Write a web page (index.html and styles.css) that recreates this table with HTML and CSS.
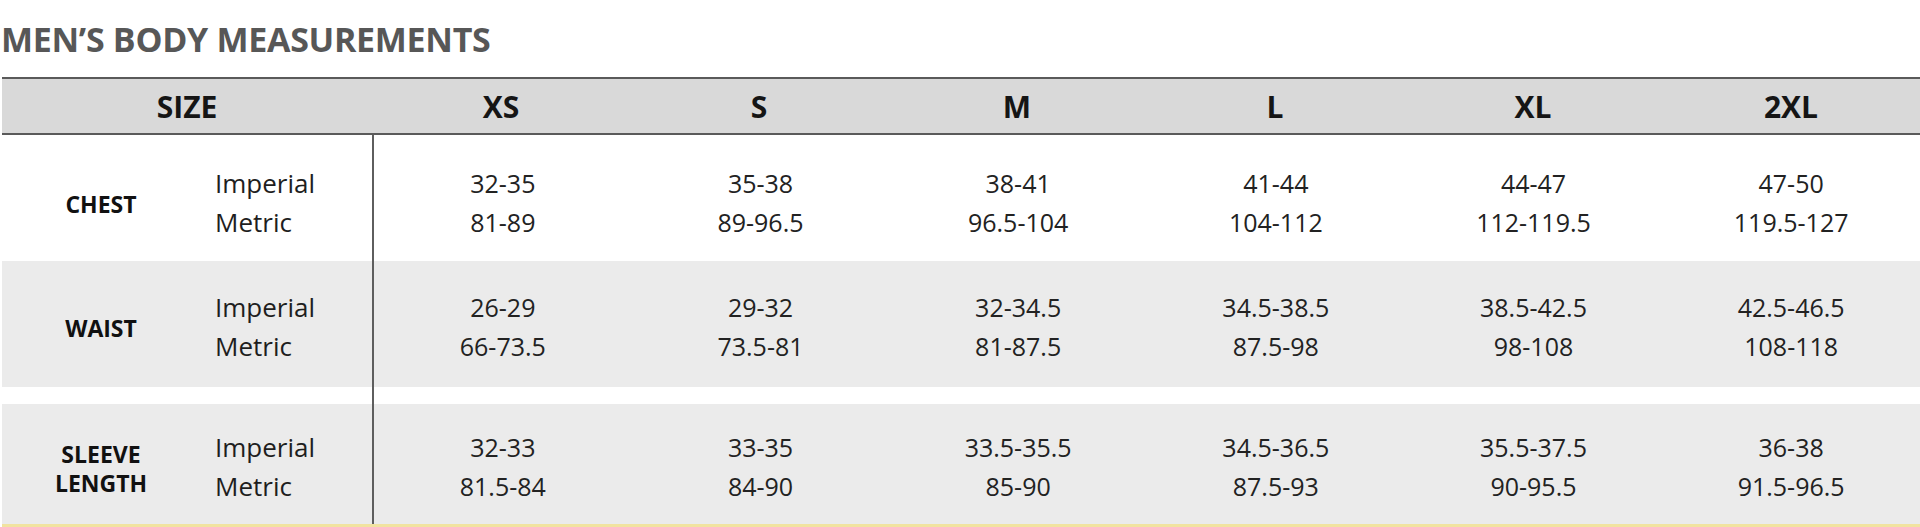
FILE: index.html
```html
<!DOCTYPE html>
<html lang="en">
<head>
<meta charset="utf-8">
<title>Men's Body Measurements</title>
<link rel="stylesheet" href="styles.css">
</head>
<body>
<div class="page">
  <h1 class="title">MEN’S BODY MEASUREMENTS</h1>
  <div class="chart">
    <div class="head">
      <div class="hcell">SIZE</div>
      <div class="hcell">XS</div>
      <div class="hcell">S</div>
      <div class="hcell">M</div>
      <div class="hcell">L</div>
      <div class="hcell">XL</div>
      <div class="hcell">2XL</div>
    </div>
    <div class="body">
      <div class="labels">
        <div class="row first">
          <div class="label">CHEST</div>
          <div class="units"><span>Imperial</span><span>Metric</span></div>
        </div>
        <div class="row shade">
          <div class="label">WAIST</div>
          <div class="units"><span>Imperial</span><span>Metric</span></div>
        </div>
        <div class="row shade last">
          <div class="label">SLEEVE<br>LENGTH</div>
          <div class="units"><span>Imperial</span><span>Metric</span></div>
        </div>
      </div>
      <div class="values">
        <div class="row first">
          <div class="val"><span>32-35</span><span>81-89</span></div>
          <div class="val"><span>35-38</span><span>89-96.5</span></div>
          <div class="val"><span>38-41</span><span>96.5-104</span></div>
          <div class="val"><span>41-44</span><span>104-112</span></div>
          <div class="val"><span>44-47</span><span>112-119.5</span></div>
          <div class="val"><span>47-50</span><span>119.5-127</span></div>
        </div>
        <div class="row shade">
          <div class="val"><span>26-29</span><span>66-73.5</span></div>
          <div class="val"><span>29-32</span><span>73.5-81</span></div>
          <div class="val"><span>32-34.5</span><span>81-87.5</span></div>
          <div class="val"><span>34.5-38.5</span><span>87.5-98</span></div>
          <div class="val"><span>38.5-42.5</span><span>98-108</span></div>
          <div class="val"><span>42.5-46.5</span><span>108-118</span></div>
        </div>
        <div class="row shade last">
          <div class="val"><span>32-33</span><span>81.5-84</span></div>
          <div class="val"><span>33-35</span><span>84-90</span></div>
          <div class="val"><span>33.5-35.5</span><span>85-90</span></div>
          <div class="val"><span>34.5-36.5</span><span>87.5-93</span></div>
          <div class="val"><span>35.5-37.5</span><span>90-95.5</span></div>
          <div class="val"><span>36-38</span><span>91.5-96.5</span></div>
        </div>
      </div>
    </div>
  </div>
</div>
</body>
</html>
```

FILE: styles.css
```css
* { box-sizing: border-box; }

html, body {
  margin: 0;
  padding: 0;
  background: #ffffff;
}

body {
  font-family: "Open Sans", "Noto Sans", "Liberation Sans", sans-serif;
  color: #222222;
  overflow: hidden;
}

.page {
  padding-top: 19px;
}

.title {
  margin: 0 0 18px 1px;
  font-size: 34px;
  line-height: 40px;
  font-weight: 700;
  color: #575757;
  letter-spacing: -0.3px;
}

.chart {
  margin-left: 2px;
  border-bottom: 3px solid #f1e3a0;
}

.head {
  display: grid;
  grid-template-columns: 370px repeat(6, 1fr);
  height: 58px;
  background: #d9d9d9;
  border-top: 2px solid #5a5a5a;
  border-bottom: 2px solid #5a5a5a;
}

.hcell {
  display: flex;
  align-items: center;
  justify-content: center;
  padding-top: 1px;
  font-size: 30px;
  font-weight: 700;
  color: #151515;
}

.body {
  display: flex;
}

.labels {
  width: 370px;
  flex: none;
}

.values {
  flex: 1;
  border-left: 2px solid #5e5e5e;
}

.row {
  height: 126px;
  padding: 27px 0 21px;
}

.row.first {
  padding: 29px 0 19px;
}

.row.shade {
  background: #ebebeb;
}

.row.last {
  margin-top: 17px;
  height: 120px;
  padding: 24px 0 18px;
}

.labels .row {
  display: grid;
  grid-template-columns: 198px 1fr;
  align-items: center;
}

.label {
  text-align: center;
  font-size: 23px;
  line-height: 29px;
  font-weight: 700;
  color: #111111;
  padding-top: 3px;
}

.units {
  display: flex;
  flex-direction: column;
  padding-left: 15px;
  font-size: 26px;
  line-height: 39px;
  color: #1e1e1e;
}

.values .row {
  display: grid;
  grid-template-columns: repeat(6, 1fr);
}

.val {
  display: flex;
  flex-direction: column;
  align-items: center;
  font-size: 25px;
  line-height: 39px;
  color: #222222;
}
```
